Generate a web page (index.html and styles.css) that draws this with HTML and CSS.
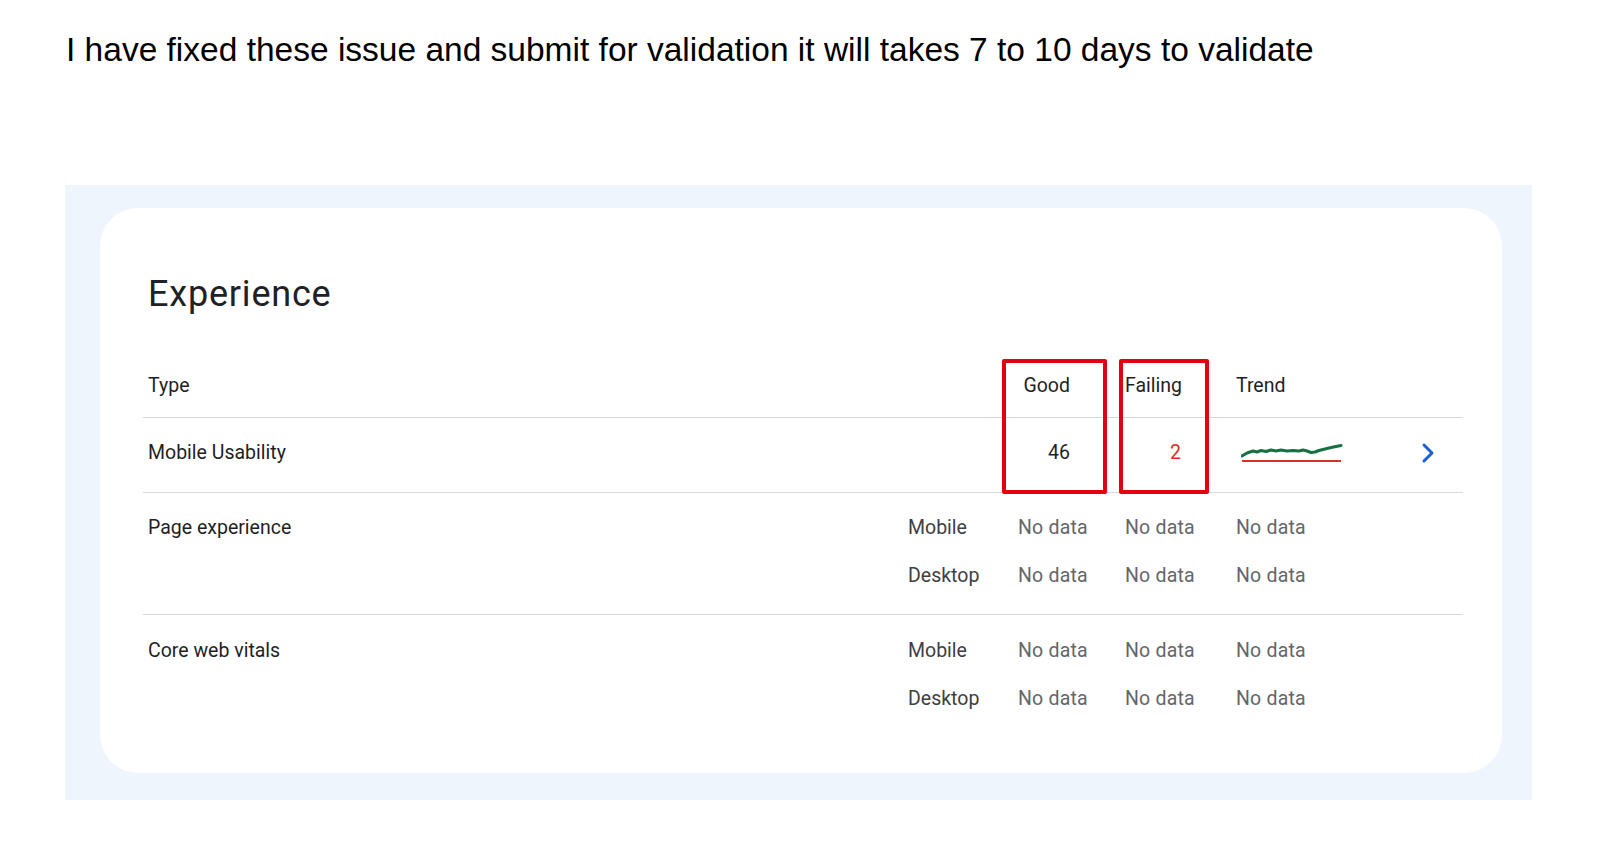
FILE: index.html
```html
<!DOCTYPE html>
<html lang="en">
<head>
<meta charset="utf-8">
<title>Experience</title>
<link rel="stylesheet" href="styles.css">
</head>
<body>
<p class="note">I have fixed these issue and submit for validation it will takes 7 to 10 days to validate</p>

<div class="panel">
  <section class="card">
    <h1 class="title">Experience</h1>

    <div class="table">
      <div class="row head">
        <div class="c-label">Type</div>
        <div class="c-plat"></div>
        <div class="c-num">Good</div>
        <div class="c-num">Failing</div>
        <div class="c-trend">Trend</div>
        <div class="c-go"></div>
      </div>

      <div class="row mu">
        <div class="c-label">Mobile Usability</div>
        <div class="c-plat"></div>
        <div class="c-num">46</div>
        <div class="c-num fail">2</div>
        <div class="c-trend">
          <svg class="spark" width="102" height="22" viewBox="0 0 102 22">
            <polyline points="1,14 6,11 12,9 16,10 20,8.5 25,9.5 30,8 35,9 40,8 46,9 52,8.5 58,9 62,8 66,9 70,10.5 74,10 78,8.5 84,7 90,5.5 95,4.5 100,3.5" fill="none" stroke="#17703f" stroke-width="3" stroke-linejoin="round" stroke-linecap="round"/>
            <line x1="1" y1="19" x2="100" y2="19" stroke="#d93025" stroke-width="2"/>
          </svg>
        </div>
        <div class="c-go">
          <svg class="chev" width="14" height="22" viewBox="0 0 14 22">
            <path d="M3 3 L11 11 L3 19" fill="none" stroke="#1a5fd6" stroke-width="3" stroke-linecap="round" stroke-linejoin="round"/>
          </svg>
        </div>
      </div>

      <div class="row group">
        <div class="c-label">Page experience</div>
        <div class="c-plat">Mobile</div>
        <div class="c-nd">No data</div>
        <div class="c-nd">No data</div>
        <div class="c-nd">No data</div>
        <div class="c-go"></div>
        <div class="c-label"></div>
        <div class="c-plat">Desktop</div>
        <div class="c-nd">No data</div>
        <div class="c-nd">No data</div>
        <div class="c-nd">No data</div>
        <div class="c-go"></div>
      </div>

      <div class="row group last">
        <div class="c-label">Core web vitals</div>
        <div class="c-plat">Mobile</div>
        <div class="c-nd">No data</div>
        <div class="c-nd">No data</div>
        <div class="c-nd">No data</div>
        <div class="c-go"></div>
        <div class="c-label"></div>
        <div class="c-plat">Desktop</div>
        <div class="c-nd">No data</div>
        <div class="c-nd">No data</div>
        <div class="c-nd">No data</div>
        <div class="c-go"></div>
      </div>

      <div class="mark mark-good"></div>
      <div class="mark mark-fail"></div>
    </div>
  </section>
</div>
</body>
</html>
```

FILE: styles.css
```css
* {
  box-sizing: border-box;
}

html, body {
  margin: 0;
  padding: 0;
  background: #ffffff;
}

body {
  width: 1600px;
  height: 850px;
  overflow: hidden;
  font-family: Roboto, "Noto Sans", sans-serif;
  color: #1f1f1f;
}

.note {
  margin: 30px 0 0 66px;
  font-family: "Liberation Sans", Arial, sans-serif;
  font-size: 33.5px;
  line-height: 40px;
  color: #000000;
  white-space: nowrap;
}

.panel {
  margin: 115px 0 0 65px;
  width: 1467px;
  height: 615px;
  padding: 23px 30px 27px 35px;
  background: #eef5fd;
}

.card {
  background: #ffffff;
  border-radius: 38px;
  padding: 64px 39px 51px 43px;
  height: 565px;
}

.title {
  margin: 0 0 37px 5px;
  font-family: Roboto, "Noto Sans", sans-serif;
  font-weight: 400;
  font-size: 36px;
  line-height: 44px;
  color: #202124;
  letter-spacing: 0.8px;
}

.table {
  position: relative;
  font-size: 19.5px;
}

.row {
  display: grid;
  grid-template-columns: 765px 110px 107px 111px 150px 77px;
  align-items: center;
  border-bottom: 1px solid #d6d8dc;
}

.row.last {
  border-bottom: none;
}

.head {
  height: 65px;
  color: #1f1f1f;
}

.mu {
  height: 75px;
  padding-bottom: 5px;
  color: #1f1f1f;
}

.group {
  grid-auto-rows: 48px;
  padding: 10px 0 15px;
}

.group.last {
  padding: 11px 0 0;
}

.c-label {
  padding-left: 5px;
  color: #1f1f1f;
}

.c-plat {
  color: #3c4043;
}

.c-num {
  text-align: right;
  padding-right: 55px;
}

.fail {
  color: #d93025;
}

.c-nd {
  color: #63666a;
  letter-spacing: 0.2px;
}

.c-trend {
  display: flex;
  align-items: center;
}

.spark {
  display: block;
  margin-left: 5px;
}

.c-go {
  display: flex;
  align-items: center;
}

.chev {
  display: block;
  margin-left: 35px;
}

.mark {
  position: absolute;
  top: 6px;
  height: 135px;
  border: 4px solid #e4000f;
  border-radius: 2px;
}

.mark-good {
  left: 859px;
  width: 105px;
}

.mark-fail {
  left: 976px;
  width: 90px;
}
```
